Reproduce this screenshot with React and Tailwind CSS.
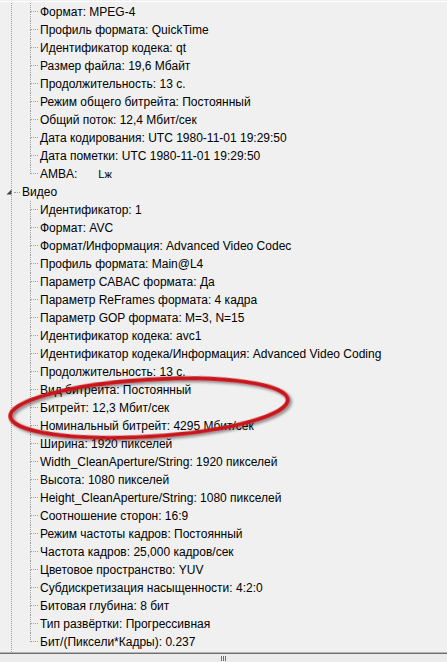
import React from "react";

const general = [
  "Формат: MPEG-4",
  "Профиль формата: QuickTime",
  "Идентификатор кодека: qt",
  "Размер файла: 19,6 Мбайт",
  "Продолжительность: 13 с.",
  "Режим общего битрейта: Постоянный",
  "Общий поток: 12,4 Мбит/сек",
  "Дата кодирования: UTC 1980-11-01 19:29:50",
  "Дата пометки: UTC 1980-11-01 19:29:50",
];

const video = [
  "Идентификатор: 1",
  "Формат: AVC",
  "Формат/Информация: Advanced Video Codec",
  "Профиль формата: Main@L4",
  "Параметр CABAC формата: Да",
  "Параметр ReFrames формата: 4 кадра",
  "Параметр GOP формата: M=3, N=15",
  "Идентификатор кодека: avc1",
  "Идентификатор кодека/Информация: Advanced Video Coding",
  "Продолжительность: 13 с.",
  "Вид битрейта: Постоянный",
  "Битрейт: 12,3 Мбит/сек",
  "Номинальный битрейт: 4295 Мбит/сек",
  "Ширина: 1920 пикселей",
  "Width_CleanAperture/String: 1920 пикселей",
  "Высота: 1080 пикселей",
  "Height_CleanAperture/String: 1080 пикселей",
  "Соотношение сторон: 16:9",
  "Режим частоты кадров: Постоянный",
  "Частота кадров: 25,000 кадров/сек",
  "Цветовое пространство: YUV",
  "Субдискретизация насыщенности: 4:2:0",
  "Битовая глубина: 8 бит",
  "Тип развёртки: Прогрессивная",
  "Бит/(Пиксели*Кадры): 0.237",
];

// one leaf of the tree, with its own piece of the dotted guide line
function Leaf({ last, children }) {
  return (
    <div className="flex h-[18px]">
      <div className="flex w-[8px] shrink-0 flex-col">
        <div className="h-[9px] border-b border-l border-dotted border-[#a0a0a0]" />
        <div className={last ? "h-[9px]" : "h-[9px] border-l border-dotted border-[#a0a0a0]"} />
      </div>
      <div className="ml-[2px] whitespace-nowrap leading-[18px]">{children}</div>
    </div>
  );
}

export default function App() {
  return (
    <div
      className="relative flex h-[662px] w-[447px] flex-col overflow-hidden bg-[#f0f0f0] text-[12px] text-black"
      style={{ fontFamily: '"Liberation Sans", Arial, sans-serif' }}
    >
      <div className="h-[3px] pt-px">
        <div className="h-px bg-white" />
      </div>

      {/* дерево */}
      <div className="flex flex-1 flex-col pl-[11px]">
        <div className="flex flex-1 flex-col border-l border-dotted border-[#a0a0a0]">
          <div className="ml-[18px] flex flex-col">
            {general.map((t) => (
              <Leaf key={t}>{t}</Leaf>
            ))}
            <Leaf last>
              AMBA:
              <span className="ml-[21px] text-[11px]">Lж</span>
            </Leaf>
          </div>

          <div className="-ml-[6px] flex h-[18px] items-center">
            <svg width="6" height="6" viewBox="0 0 6 6" className="shrink-0">
              <polygon points="5.5,0.5 5.5,5.5 0.5,5.5" fill="#404040" />
            </svg>
            <div className="ml-[2px] w-[6px] border-t border-dotted border-[#a0a0a0]" />
            <span className="ml-[2px] leading-[18px]">Видео</span>
          </div>

          <div className="ml-[18px] flex flex-col">
            {video.map((t, i) => (
              <Leaf key={t} last={i === video.length - 1}>
                {t}
              </Leaf>
            ))}
          </div>
        </div>
      </div>

      {/* нижняя граница и разделитель */}
      <div className="h-px bg-[#b4b4b4]" />
      <div className="h-px bg-[#6e6e6e]" />
      <div className="flex h-[8px] items-center justify-center bg-[#ececec]">
        <div className="flex gap-px">
          <div className="h-[5px] w-px bg-[#707070]" />
          <div className="h-[5px] w-px bg-[#707070]" />
          <div className="h-[5px] w-px bg-[#707070]" />
        </div>
      </div>

      {/* красная пометка поверх */}
      <svg className="pointer-events-none absolute left-0 top-0" width="447" height="662">
        <defs>
          <filter id="sh" x="-10%" y="-50%" width="120%" height="200%">
            <feGaussianBlur in="SourceAlpha" stdDeviation="1.5" />
            <feOffset dx="1.5" dy="2" result="b" />
            <feComponentTransfer>
              <feFuncA type="linear" slope="0.45" />
            </feComponentTransfer>
            <feMerge>
              <feMergeNode />
              <feMergeNode in="SourceGraphic" />
            </feMerge>
          </filter>
        </defs>
        <ellipse
          cx="149"
          cy="408"
          rx="139"
          ry="28.5"
          transform="rotate(-3.5 149 408)"
          fill="none"
          stroke="#c8161d"
          strokeWidth="4"
          filter="url(#sh)"
        />
      </svg>
    </div>
  );
}
